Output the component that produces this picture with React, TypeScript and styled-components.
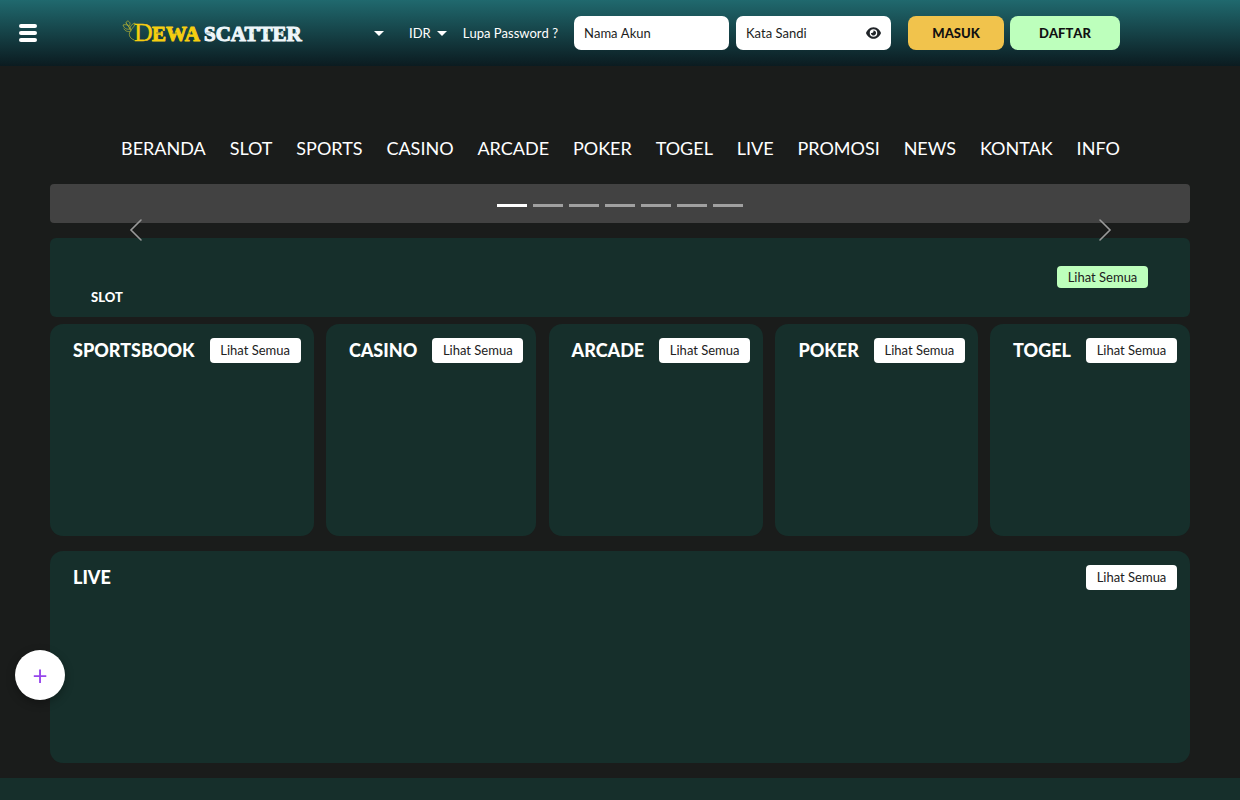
import React from "react";
import styled, { createGlobalStyle } from "styled-components";

const Global = createGlobalStyle`
  *, *::before, *::after { box-sizing: border-box; }
  body {
    margin: 0;
    background: #1a1c1b;
    color: #fff;
    font-family: Lato, "Liberation Sans", sans-serif;
    font-size: 13px;
    line-height: 20px;
  }
  a { color: inherit; text-decoration: none; }
  button { font: inherit; border: 0; padding: 0; cursor: pointer; }
`;

const panel = "#162f2b";

const Header = styled.header`
  height: 66px;
  display: flex;
  justify-content: center;
  position: relative;
  background: linear-gradient(#20696e, #0b1b20);
`;

const MenuButton = styled.button`
  position: absolute;
  left: 19px;
  top: 24px;
  width: 18px;
  display: grid;
  gap: 3px;
  background: none;
`;

const MenuBar = styled.span`
  height: 4px;
  border-radius: 2px;
  background: #fff;
`;

const HeaderInner = styled.div`
  width: 100%;
  max-width: 1000px;
  display: flex;
  align-items: center;
`;

const LogoLink = styled.a`
  display: block;
  height: 34px;
  margin-right: auto;
  svg { display: block; }
`;

const Dropdown = styled.button`
  display: flex;
  align-items: center;
  gap: 6px;
  color: #fff;
  background: none;
  margin-right: 16px;
  &:first-of-type { margin-right: 25px; }
`;

const Caret = styled.span`
  border: 5px solid transparent;
  border-top-color: #fff;
  border-bottom: 0;
`;

const ForgotLink = styled.a`
  margin-right: 16px;
  font-kerning: none;
`;

const Field = styled.label`
  width: 155px;
  height: 34px;
  display: flex;
  align-items: center;
  padding: 0 10px;
  margin-right: 7px;
  border-radius: 7px;
  background: #fff;
  color: #212529;
`;

const Input = styled.input`
  flex: 1;
  min-width: 0;
  height: 34px;
  padding: 0;
  border: 0;
  outline: 0;
  background: none;
  font: inherit;
  font-kerning: none;
  color: #212529;
  &::placeholder { color: #1c1d1c; opacity: 1; }
`;

const EyeButton = styled.button`
  display: block;
  background: none;
  color: #212529;
  svg { display: block; }
`;

const Action = styled.button<{ $bg: string; $width: number }>`
  width: ${(p) => p.$width}px;
  height: 34px;
  border-radius: 8px;
  background: ${(p) => p.$bg};
  color: #111;
  font-weight: 900;
  font-kerning: none;
`;

const Actions = styled.div`
  display: flex;
  gap: 6px;
  margin-left: 10px;
`;

const Nav = styled.nav`
  max-width: 1000px;
  margin: 66px auto 0;
  padding-left: 1px;
  display: flex;
  justify-content: space-between;
  font-size: 18px;
  line-height: 32px;
`;

const Main = styled.main`
  padding: 0 50px;
  margin-top: 20px;
`;

const Carousel = styled.section`
  position: relative;
  height: 39px;
  display: flex;
  justify-content: center;
  align-items: center;
  gap: 6px;
  padding-top: 4px;
  border-radius: 4px;
  background: #424242;
`;

const Slide = styled.button<{ $active: boolean }>`
  width: 30px;
  height: 3px;
  background: ${(p) => (p.$active ? "#fff" : "#a0a0a0")};
`;

const Arrow = styled.button<{ $side: "left" | "right" }>`
  position: absolute;
  top: 34px;
  ${(p) => p.$side}: 74px;
  width: 24px;
  height: 24px;
  background: none;
  svg { display: block; }
`;

const SlotPanel = styled.section`
  height: 79px;
  margin-top: 15px;
  padding: 0 42px 0 41px;
  display: flex;
  justify-content: space-between;
  align-items: flex-start;
  border-radius: 6px;
  background: ${panel};
`;

const SlotTitle = styled.h2`
  margin: 0;
  padding-bottom: 10px;
  align-self: flex-end;
  font-size: 13px;
  line-height: 20px;
  font-weight: 900;
`;

const More = styled.a<{ $accent?: boolean }>`
  flex: none;
  width: 91px;
  margin-top: ${(p) => (p.$accent ? 28 : 0)}px;
  text-align: center;
  border-radius: 4px;
  line-height: ${(p) => (p.$accent ? 22 : 25)}px;
  background: ${(p) => (p.$accent ? "#bdffbc" : "#fff")};
  color: #212121;
`;

const Cards = styled.div`
  display: flex;
  justify-content: space-between;
  margin: 7px 0 15px;
`;

const Card = styled.section`
  height: 212px;
  padding: 14px 13px 0 23px;
  border-radius: 13px;
  background: ${panel};
`;

const CardHead = styled.div`
  display: flex;
  justify-content: space-between;
  gap: 15px;
`;

const CardTitle = styled.h2`
  margin: 0;
  font-size: 18px;
  line-height: 25px;
  font-weight: 900;
`;

const Footer = styled.footer`
  height: 22px;
  margin-top: 15px;
  background: ${panel};
`;

const FloatButton = styled.button`
  position: fixed;
  left: 15px;
  bottom: 100px;
  width: 50px;
  height: 50px;
  border-radius: 50%;
  background: #fff;
  color: #9747ec;
  font-size: 26px;
  line-height: 50px;
  text-align: center;
  box-shadow: 0 3px 10px rgba(0, 0, 0, 0.3);
`;

const links = ["BERANDA", "SLOT", "SPORTS", "CASINO", "ARCADE", "POKER", "TOGEL", "LIVE", "PROMOSI", "NEWS", "KONTAK", "INFO"];
const games = ["SPORTSBOOK", "CASINO", "ARCADE", "POKER", "TOGEL"];

function Logo() {
  return (
    <svg width="190" height="34" viewBox="0 0 190 34" role="img" aria-label="Dewa Scatter">
      <g fill="none" stroke="#a9ab35" strokeWidth="0.8" strokeLinecap="round">
        <path d="M14 24c-5-2-6-6-3-10 2-3 4-4 4-7-3 1-5 3-5 6" />
        <path d="M10 13c-4 1-6-1-7-4 3-1 6 0 7 4M9 10C5 8 6 5 8 5c2 1 3 3 1 5M4 13c2 3 5 3 7 2M6 7l5 7" />
      </g>
      <g fontFamily="'Liberation Serif', serif" fontWeight="700" strokeLinejoin="round">
        <g fill="#f6ce10" stroke="#f6ce10">
          <text x="14" y="25" fontSize="26" fontWeight="400" strokeWidth="0.3">D</text>
          <text x="32" y="25" fontSize="21" strokeWidth="1">EWA</text>
        </g>
        <text x="84" y="25" fontSize="21" fill="#eef6fa" stroke="#eef6fa" strokeWidth="1.1">SCATTER</text>
      </g>
      <g stroke="#1b4a50" strokeWidth="0.8" fill="none" opacity="0.6">
        <path d="M36 17h5M52 17h5M66 17h5M86 17h5M100 17h4M132 17h4M146 17h4M159 17h4M173 17h4" />
      </g>
    </svg>
  );
}

export default function App() {
  return (
    <>
      <Global />
      <Header>
        <MenuButton aria-label="Menu">
          <MenuBar />
          <MenuBar />
          <MenuBar />
        </MenuButton>
        <HeaderInner>
          <LogoLink href="#"><Logo /></LogoLink>
          <Dropdown aria-label="Bahasa"><Caret /></Dropdown>
          <Dropdown>IDR<Caret /></Dropdown>
          <ForgotLink href="#">Lupa Password ?</ForgotLink>
          <Field>
            <Input type="text" placeholder="Nama Akun" aria-label="Nama Akun" />
          </Field>
          <Field>
            <Input type="password" placeholder="Kata Sandi" aria-label="Kata Sandi" />
            <EyeButton aria-label="Tampilkan kata sandi">
              <svg width="15" height="14" viewBox="0 0 576 512" fill="currentColor">
                <path d="M288 32c-80.800 0-145.500 36.800-192.600 80.600C48.600 156 17.300 208 2.500 243.700c-3.300 7.900-3.300 16.700 0 24.600C17.300 304 48.600 356 95.400 399.400C142.500 443.200 207.200 480 288 480s145.500-36.800 192.600-80.600c46.800-43.500 78.100-95.400 93-131.100c3.300-7.900 3.300-16.700 0-24.600c-14.900-35.700-46.200-87.700-93-131.100C433.500 68.800 368.800 32 288 32zM144 256a144 144 0 1 1 288 0 144 144 0 1 1 -288 0zm144-64c0 35.300-28.700 64-64 64c-7.100 0-13.900-1.200-20.300-3.300c-5.500-1.800-11.900 1.600-11.700 7.400c.3 6.900 1.300 13.800 3.200 20.700c13.700 51.200 66.400 81.600 117.600 67.900s81.600-66.400 67.900-117.600c-11.100-41.500-47.800-69.400-88.600-71.100c-5.800-.2-9.200 6.100-7.400 11.700c2.100 6.400 3.300 13.200 3.300 20.300z" />
              </svg>
            </EyeButton>
          </Field>
          <Actions>
            <Action $bg="#f1c34c" $width={96}>MASUK</Action>
            <Action $bg="#bdffbc" $width={110}>DAFTAR</Action>
          </Actions>
        </HeaderInner>
      </Header>
      <Nav>
        {links.map((l) => <a key={l} href="#">{l}</a>)}
      </Nav>
      <Main>
        <Carousel aria-label="Promosi">
          {[0, 1, 2, 3, 4, 5, 6].map((i) => (
            <Slide key={i} $active={i === 0} aria-label={`Slide ${i + 1}`} />
          ))}
          <Arrow $side="left" aria-label="Sebelumnya">
            <svg width="24" height="24" fill="none" stroke="#9a9a9a" strokeWidth="1.6" strokeLinecap="round">
              <path d="M17 2 7 12l10 10" />
            </svg>
          </Arrow>
          <Arrow $side="right" aria-label="Berikutnya">
            <svg width="24" height="24" fill="none" stroke="#9a9a9a" strokeWidth="1.6" strokeLinecap="round">
              <path d="m8 2 10 10L8 22" />
            </svg>
          </Arrow>
        </Carousel>
        <SlotPanel>
          <SlotTitle>SLOT</SlotTitle>
          <More href="#" $accent>Lihat Semua</More>
        </SlotPanel>
        <Cards>
          {games.map((g) => (
            <Card key={g}>
              <CardHead>
                <CardTitle>{g}</CardTitle>
                <More href="#">Lihat Semua</More>
              </CardHead>
            </Card>
          ))}
        </Cards>
        <Card>
          <CardHead>
            <CardTitle>LIVE</CardTitle>
            <More href="#">Lihat Semua</More>
          </CardHead>
        </Card>
      </Main>
      <Footer />
      <FloatButton aria-label="Tambah">+</FloatButton>
    </>
  );
}
